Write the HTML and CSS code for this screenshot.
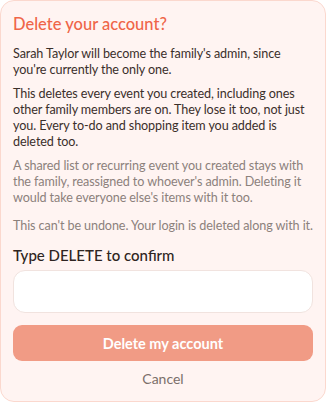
FILE: index.html
```html
<!DOCTYPE html>
<html>
<head>
<meta charset="utf-8">
<link rel="stylesheet" href="styles.css">
</head>
<body>
<div class="card">
  <h2 class="title">Delete your account?</h2>
  <p class="text">Sarah Taylor will become the family's admin, since you're currently the only one.</p>
  <p class="text">This deletes every event you created, including ones other family members are on. They lose it too, not just you. Every to-do and shopping item you added is deleted too.</p>
  <p class="text muted">A shared list or recurring event you created stays with the family, reassigned to whoever's admin. Deleting it would take everyone else's items with it too.</p>
  <p class="text muted last">This can't be undone. Your login is deleted along with it.</p>
  <label class="label" for="confirm">Type DELETE to confirm</label>
  <input class="input" id="confirm" type="text">
  <button class="danger">Delete my account</button>
  <button class="cancel">Cancel</button>
</div>
</body>
</html>
```
FILE: styles.css
```css
html, body {
  margin: 0;
  padding: 0;
  background: #ffffff;
}
body {
  font-family: Lato, "Open Sans", sans-serif;
}
.card {
  box-sizing: border-box;
  width: 326px;
  height: 402px;
  border: 1px solid #fbd8ce;
  border-radius: 14px;
  background: #fff4f2;
  padding: 12px 12px 0 12px;
  display: flex;
  flex-direction: column;
}
.title {
  margin: 0 0 11px 0;
  font-size: 16.5px;
  font-weight: 500;
  line-height: 22px;
  color: #ef6548;
}
.text {
  margin: 0 0 8px 0;
  font-size: 12.6px;
  letter-spacing: -0.1px;
  line-height: 16px;
  color: #3b2f2b;
}
.muted {
  color: #8c817c;
  margin-bottom: 12px;
}
.last {
  margin-bottom: 11px;
}
.label {
  font-size: 15px;
  line-height: 20px;
  color: #2e2421;
  font-weight: 500;
}
.input {
  box-sizing: border-box;
  margin-top: 5px;
  height: 43px;
  width: 100%;
  border: 1px solid #f1e3df;
  border-radius: 12px;
  background: #ffffff;
  outline: none;
}
.danger {
  margin-top: 12px;
  height: 36px;
  width: 100%;
  border: none;
  border-radius: 9px;
  background: #f19b85;
  color: #ffffff;
  font-family: inherit;
  font-size: 14.5px;
  font-weight: 700;
}
.cancel {
  margin-top: 9px;
  border: none;
  background: none;
  color: #7b6f6a;
  font-family: inherit;
  font-size: 14px;
  line-height: 18px;
  padding: 0;
}
```
